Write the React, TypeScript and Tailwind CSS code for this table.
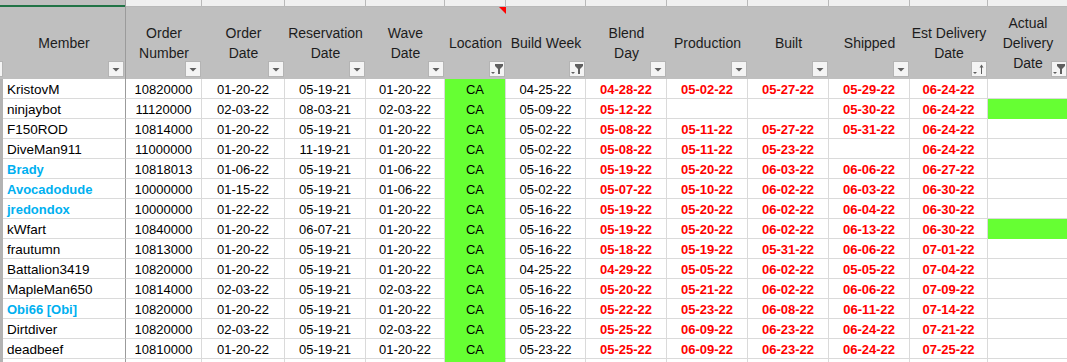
const columns = [
  { lines: ["Member"], filter: "plain" },
  { lines: ["Order", "Number"], filter: "plain" },
  { lines: ["Order", "Date"], filter: "plain" },
  { lines: ["Reservation", "Date"], filter: "plain" },
  { lines: ["Wave", "Date"], filter: "plain" },
  { lines: ["Location"], filter: "funnel", comment: true },
  { lines: ["Build Week"], filter: "funnel" },
  { lines: ["Blend", "Day"], filter: "plain" },
  { lines: ["Production"], filter: "plain" },
  { lines: ["Built"], filter: "plain" },
  { lines: ["Shipped"], filter: "plain" },
  { lines: ["Est Delivery", "Date"], filter: "sort" },
  { lines: ["Actual", "Delivery", "Date"], filter: "funnel" },
];

// member, order #, order date, reservation, wave, build week, blend, production, built, shipped, est delivery, delivered
const rows: [string, string, string, string, string, string, string, string, string, string, string, boolean][] = [
  ["KristovM", "10820000", "01-20-22", "05-19-21", "01-20-22", "04-25-22", "04-28-22", "05-02-22", "05-27-22", "05-29-22", "06-24-22", false],
  ["ninjaybot", "11120000", "02-03-22", "08-03-21", "02-03-22", "05-09-22", "05-12-22", "", "", "05-30-22", "06-24-22", true],
  ["F150ROD", "10814000", "01-20-22", "05-19-21", "01-20-22", "05-02-22", "05-08-22", "05-11-22", "05-27-22", "05-31-22", "06-24-22", false],
  ["DiveMan911", "11000000", "01-20-22", "11-19-21", "01-20-22", "05-02-22", "05-08-22", "05-11-22", "05-23-22", "", "06-24-22", false],
  ["Brady", "10818013", "01-06-22", "05-19-21", "01-06-22", "05-16-22", "05-19-22", "05-20-22", "06-03-22", "06-06-22", "06-27-22", false],
  ["Avocadodude", "10000000", "01-15-22", "05-19-21", "01-06-22", "05-02-22", "05-07-22", "05-10-22", "06-02-22", "06-03-22", "06-30-22", false],
  ["jredondox", "10000000", "01-22-22", "05-19-21", "01-20-22", "05-16-22", "05-19-22", "05-20-22", "06-02-22", "06-04-22", "06-30-22", false],
  ["kWfart", "10840000", "01-20-22", "06-07-21", "01-20-22", "05-16-22", "05-19-22", "05-20-22", "06-02-22", "06-13-22", "06-30-22", true],
  ["frautumn", "10813000", "01-20-22", "05-19-21", "01-20-22", "05-16-22", "05-18-22", "05-19-22", "05-31-22", "06-06-22", "07-01-22", false],
  ["Battalion3419", "10820000", "01-20-22", "05-19-21", "01-20-22", "04-25-22", "04-29-22", "05-05-22", "06-02-22", "05-05-22", "07-04-22", false],
  ["MapleMan650", "10814000", "02-03-22", "05-19-21", "02-03-22", "05-16-22", "05-20-22", "05-21-22", "06-02-22", "06-06-22", "07-09-22", false],
  ["Obi66 [Obi]", "10820000", "01-20-22", "05-19-21", "01-20-22", "05-16-22", "05-22-22", "05-23-22", "06-08-22", "06-11-22", "07-14-22", false],
  ["Dirtdiver", "10820000", "02-03-22", "05-19-21", "02-03-22", "05-23-22", "05-25-22", "06-09-22", "06-23-22", "06-24-22", "07-21-22", false],
  ["deadbeef", "10810000", "01-20-22", "05-19-21", "01-20-22", "05-23-22", "05-25-22", "06-09-22", "06-23-22", "06-24-22", "07-25-22", false],
];

const highlighted = ["Brady", "Avocadodude", "jredondox", "Obi66 [Obi]"];

const FilterButton = ({ kind }: { kind: string }) => (
  <div className="absolute right-[1px] bottom-[2px] w-[16px] h-[16px] border border-[#b4b4b4] bg-[#f4f4f4] flex items-center justify-center">
    {kind === "plain" && (
      <svg width="14" height="14" viewBox="0 0 14 14">
        <polygon points="3.5,6 10.5,6 7,9.5" fill="#5f5f5f" />
      </svg>
    )}
    {kind === "funnel" && (
      <svg width="14" height="14" viewBox="0 0 14 14">
        <polygon points="1,10 5,10 3,12" fill="#5f5f5f" />
        <polygon points="5,2 13,2 13,4 10,7 10,12 8,12 8,7 5,4" fill="#5f5f5f" />
      </svg>
    )}
    {kind === "sort" && (
      <svg width="14" height="14" viewBox="0 0 14 14">
        <polygon points="1,10 5,10 3,12" fill="#5f5f5f" />
        <rect x="9" y="4" width="1" height="8" fill="#5f5f5f" />
        <polygon points="7.5,5.5 11.5,5.5 9.5,2.5" fill="#5f5f5f" />
      </svg>
    )}
  </div>
);

export default function App() {
  return (
    <div className="w-[1067px] h-[362px] overflow-hidden bg-white text-black font-['Liberation_Sans',Arial,sans-serif]">
      <div className="grid grid-cols-[3px_123px_76px_83px_81px_79px_61px_80px_81px_81px_81px_81px_78px_80px]">
        {/* column letters strip (cut off) */}
        <div className="col-span-2 h-[7px] bg-[#bfbfbf] border-r border-[#9b9b9b] flex flex-col justify-end">
          <div className="h-[2px] bg-[#217346]" />
        </div>
        {columns.slice(1).map((_, i) => (
          <div key={"s" + i} className="h-[7px] bg-[#f0f0f0] border-r border-b border-[#b9b9b9]" />
        ))}

        {/* header */}
        <div className="h-[72px] bg-[#bfbfbf] relative">
          <div className="absolute left-0 bottom-[2px] w-[3px] h-[16px] bg-[#f4f4f4] border-y border-r border-[#b4b4b4]" />
        </div>
        {columns.map((c, i) => (
          <div
            key={"h" + i}
            className={`h-[72px] bg-[#bfbfbf] relative flex flex-col items-center justify-center text-[14px] leading-[20px] text-[#1c1c1c] ${
              i === 0 ? "border-r border-[#9b9b9b]" : ""
            }`}
          >
            {c.lines.map((l) => (
              <span key={l} className="whitespace-nowrap">
                {l}
              </span>
            ))}
            {c.comment && (
              <div className="absolute top-0 right-0 w-0 h-0 border-t-[7px] border-t-[#ff0000] border-l-[7px] border-l-transparent" />
            )}
            <FilterButton kind={c.filter} />
          </div>
        ))}

        {/* data rows */}
        {[...rows, null].map((r, ri) => {
          const cells = r
            ? [r[0], r[1], r[2], r[3], r[4], "CA", r[5], r[6], r[7], r[8], r[9], r[10], ""]
            : ["", "", "", "", "", "", "", "", "", "", "", "", ""];
          const delivered = r ? r[11] : false;
          return [
            <div key={"l" + ri} className="h-[20px] bg-[#b3b3b3]" />,
            ...cells.map((v, ci) => {
              let cls = "h-[20px] border-b border-r flex items-center pt-[2px] leading-none whitespace-nowrap ";
              if (ci === 0) {
                cls += "justify-start pl-[4px] border-r-[#9b9b9b] border-b-[#dadada] ";
                cls += highlighted.includes(v) ? "text-[13px] font-bold text-[#00b0f0]" : "text-[13.5px]";
              } else {
                cls += "justify-center border-[#dadada] text-[13px] ";
              }
              if (ci === 5) cls += "bg-[#66ff33] border-b-[#66ff33] ";
              if (ci >= 7 && ci <= 11) cls += "font-bold text-[#ff0000] ";
              if (ci === 12 && delivered) cls += "bg-[#66ff33] border-b-[#66ff33] ";
              return (
                <div key={ri + "-" + ci} className={cls}>
                  {v}
                </div>
              );
            }),
          ];
        })}
      </div>
    </div>
  );
}
